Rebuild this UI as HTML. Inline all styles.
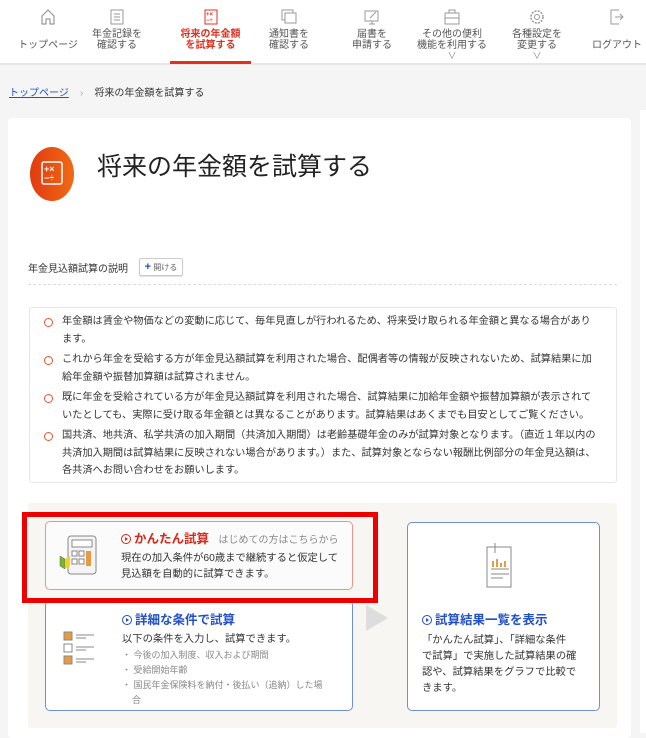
<!DOCTYPE html>
<html><head><meta charset="utf-8"><style>
*{margin:0;padding:0;box-sizing:border-box}
body{width:646px;height:733px;overflow:hidden;background:#f5f5f5;font-family:"Liberation Sans","Noto Sans CJK JP",sans-serif;color:#333;position:relative}
.nav{position:absolute;left:0;top:0;width:646px;height:65px;background:#fff;border-bottom:2px solid #e6e6e6}
.it{position:absolute;top:0;width:80px;height:65px;text-align:center;font-size:10px;line-height:11px;color:#555}
.it svg{display:block;margin:9px auto 4px}
.it.act{color:#e0301e;font-weight:bold;border-bottom:3px solid #e0301e}
.chev{font-size:9px;color:#888}
.bc{position:absolute;left:9px;top:84px;font-size:10px;color:#333}
.bc a{color:#2250c8;text-decoration:underline}
.card{position:absolute;left:8px;top:118px;width:623px;height:620px;background:#fff;border-radius:4px}
.ic{position:absolute;left:22px;top:29px;width:44px;height:54px;border-radius:50%;background:linear-gradient(90deg,#e23a10,#f06a14)}
.title{position:absolute;left:89px;top:29px;font-size:25px;color:#222}
.lab{position:absolute;left:20px;top:142px;font-size:10px;white-space:nowrap}
.btn{position:absolute;left:131px;top:140px;width:44px;height:18px;border:1px solid #ccc;border-radius:2px;font-size:8px;line-height:16px;text-align:center;color:#666;box-shadow:0 1px 1px #ddd;white-space:nowrap}
.btn b{color:#2250c8;font-size:11px}
.dash{position:absolute;left:20px;top:166px;border-top:1px dashed #ddd}
.note{position:absolute;left:21px;top:189px;width:588px;height:176px;border:1px solid #e6e6e6;border-radius:3px;padding:5px 20px 0 32px;font-size:10.2px;line-height:17.5px}
.note p{position:relative;margin-bottom:3px}
.note p:before{content:"";position:absolute;left:-18px;top:5px;width:7px;height:7px;border:1.5px solid #e8532f;border-radius:50%}
.panel{position:absolute;background:#f8f6f2;border-radius:3px}
.bx{position:absolute;background:#fff;border-radius:5px;border:1px solid #6f8fd0}
.h{font-weight:bold;font-size:12.5px;color:#2250c8}
.circ{display:inline-block;width:10px;height:10px;border:1.3px solid currentColor;border-radius:50%;vertical-align:-1px;margin-right:3px;position:relative}
.circ:after{content:"";position:absolute;left:3px;top:2px;border-left:3px solid currentColor;border-top:2px solid transparent;border-bottom:2px solid transparent}
.t{font-size:10.3px;line-height:16px;color:#333}
.g{font-size:9px;color:#888;line-height:15px}
</style></head><body>
<div class="nav">
<div class="it" style="left:8px"><svg width="14" height="16" viewBox="0 0 14 16"><path d="M1 7 7 1 13 7V15H9V10H5V15H1Z" fill="none" stroke="#999" stroke-width="1.2"/></svg><br>トップページ</div>
<div class="it" style="left:77px"><svg width="14" height="16"><rect x="1" y="1" width="12" height="14" fill="none" stroke="#999"/><path d="M4 5h6M4 8h6M4 11h6" stroke="#999"/></svg>年金記録を<br>確認する</div>
<div class="it act" style="left:170px;width:81px;height:64px"><svg width="14" height="16"><rect x="1" y="1" width="12" height="14" fill="none" stroke="#e0301e"/><text x="2" y="7" font-size="6" fill="#e0301e">+×</text><text x="2" y="13" font-size="6" fill="#e0301e">−÷</text></svg>将来の年金額<br>を試算する</div>
<div class="it" style="left:249px"><svg width="16" height="16"><rect x="1" y="1" width="11" height="10" fill="none" stroke="#999"/><rect x="4" y="4" width="11" height="10" fill="#fff" stroke="#999"/></svg>通知書を<br>確認する</div>
<div class="it" style="left:332px"><svg width="16" height="16"><rect x="1" y="2" width="13" height="10" fill="none" stroke="#999"/><path d="M5 15h6M8 12v3M6 9 12 3" stroke="#999"/></svg>届書を<br>申請する</div>
<div class="it" style="left:412px"><svg width="16" height="16"><rect x="1" y="4" width="14" height="11" fill="none" stroke="#999"/><path d="M5 4V1h6v3M1 9h14" stroke="#999" fill="none"/></svg>その他の便利<br>機能を利用する<br><span class="chev">∨</span></div>
<div class="it" style="left:497px"><svg width="16" height="16"><circle cx="8" cy="8" r="6" fill="none" stroke="#999" stroke-width="1.5" stroke-dasharray="2 1.2"/><circle cx="8" cy="8" r="2.5" fill="none" stroke="#999"/></svg>各種設定を<br>変更する<br><span class="chev">∨</span></div>
<div class="it" style="left:577px"><svg width="14" height="16"><path d="M9 1H1V15H9M5 8h8M10 5l3 3-3 3" fill="none" stroke="#999"/></svg><br>ログアウト</div>
</div>
<div class="bc"><a>トップページ</a>&nbsp;&nbsp;&nbsp;&nbsp;<span style="color:#aaa">›</span>&nbsp;&nbsp;&nbsp;&nbsp;将来の年金額を試算する</div>
<div class="card">
<div class="ic"><svg width="44" height="54" viewBox="0 0 44 54"><rect x="12" y="15" width="20" height="22" rx="2" fill="none" stroke="#fff" stroke-width="1.5"/><text x="14" y="25" font-size="9" fill="#fff" font-weight="bold">+×</text><text x="14" y="34" font-size="9" fill="#fff" font-weight="bold">−÷</text></svg></div>
<div class="title">将来の年金額を試算する</div>
<div class="lab">年金見込額試算の説明</div>
<div class="btn"><b>+</b> 開ける</div>
<div class="dash" style="width:589px"></div>
<div class="note">
<p>年金額は賃金や物価などの変動に応じて、毎年見直しが行われるため、将来受け取られる年金額と異なる場合があります。</p>
<p>これから年金を受給する方が年金見込額試算を利用された場合、配偶者等の情報が反映されないため、試算結果に加給年金額や振替加算額は試算されません。</p>
<p>既に年金を受給されている方が年金見込額試算を利用された場合、試算結果に加給年金額や振替加算額が表示されていたとしても、実際に受け取る年金額とは異なることがあります。試算結果はあくまでも目安としてご覧ください。</p>
<p>国共済、地共済、私学共済の加入期間（共済加入期間）は老齢基礎年金のみが試算対象となります。（直近１年以内の共済加入期間は試算結果に反映されない場合があります。）また、試算対象とならない報酬比例部分の年金見込額は、各共済へお問い合わせをお願いします。</p>
</div>
</div>
<div class="panel" style="left:28px;top:503px;width:589px;height:225px"></div>
<div class="bx" style="left:45px;top:600px;width:308px;height:111px">
<div style="position:absolute;left:17px;top:30px"><svg width="36" height="36"><rect x="1" y="1" width="8" height="8" fill="#e89a40" stroke="#888"/><rect x="1" y="13" width="8" height="8" fill="none" stroke="#888"/><rect x="1" y="25" width="8" height="8" fill="#e89a40" stroke="#888"/><path d="M13 4h18M13 7h10M13 16h18M13 19h10M13 28h18M13 31h10" stroke="#888"/></svg></div>
<div style="position:absolute;left:76px;top:8px"><div class="h"><span class="circ"></span>詳細な条件で試算</div>
<div class="t" style="margin-top:4px">以下の条件を入力し、試算できます。</div>
<div class="g">・ 今後の加入制度、収入および期間<br>・ 受給開始年齢<br>・ 国民年金保険料を納付・後払い（追納）した場<br>&nbsp;&nbsp;&nbsp;&nbsp;合</div></div>
</div>
<div style="position:absolute;left:366px;top:605px;width:0;height:0;border-left:22px solid #ddd;border-top:13px solid transparent;border-bottom:13px solid transparent"></div>
<div class="bx" style="left:407px;top:522px;width:193px;height:189px">
<div style="position:absolute;left:75px;top:18px"><svg width="32" height="50"><rect x="4" y="6" width="24" height="40" fill="none" stroke="#888"/><path d="M12 2v10" stroke="#888"/><path d="M10 26v-6M14 26v-8M18 26v-4M22 26v-6" stroke="#e89a40" stroke-width="2"/><path d="M8 28h18M8 33h18M8 37h12" stroke="#888"/></svg></div>
<div style="position:absolute;left:14px;top:86px"><div class="h"><span class="circ"></span>試算結果一覧を表示</div>
<div class="t" style="margin-top:5px">「かんたん試算」、「詳細な条件<br>で試算」で実施した試算結果の確<br>認や、試算結果をグラフで比較で<br>きます。</div></div>
</div>
<div style="position:absolute;left:22px;top:512px;width:356px;height:91px;border:5px solid #ee0000"></div>
<div class="bx" style="left:45px;top:521px;width:308px;height:69px;border-color:#e89590;background:#fcfbfb">
<div style="position:absolute;left:12px;top:12px"><svg width="40" height="42"><rect x="10" y="2" width="28" height="38" rx="3" fill="#f4f4f4" stroke="#888"/><rect x="14" y="6" width="20" height="7" fill="#fff" stroke="#888"/><rect x="14" y="17" width="5" height="5" fill="#fff" stroke="#888"/><rect x="21" y="17" width="5" height="5" fill="#fff" stroke="#888"/><rect x="14" y="25" width="5" height="5" fill="#fff" stroke="#888"/><rect x="21" y="25" width="5" height="5" fill="#fff" stroke="#888"/><rect x="28" y="17" width="5" height="15" fill="#e89a40"/><path d="M2 22l5 3v10l-5-3z" fill="#7bb32e" stroke="#666" stroke-width=".5"/><path d="M7 25l5-3v10l-5 3z" fill="#f2d21c"/></svg></div>
<div style="position:absolute;left:75px;top:6px"><div class="h" style="color:#d42a1c"><span class="circ"></span>かんたん試算 <span style="font-weight:normal;font-size:10px;color:#888;margin-left:6px">はじめての方はこちらから</span></div>
<div class="t" style="margin-top:4px">現在の加入条件が60歳まで継続すると仮定して<br>見込額を自動的に試算できます。</div></div>
</div>
<div style="position:absolute;left:640px;top:110px;width:6px;height:623px;background:#fff"></div>
</body></html>
